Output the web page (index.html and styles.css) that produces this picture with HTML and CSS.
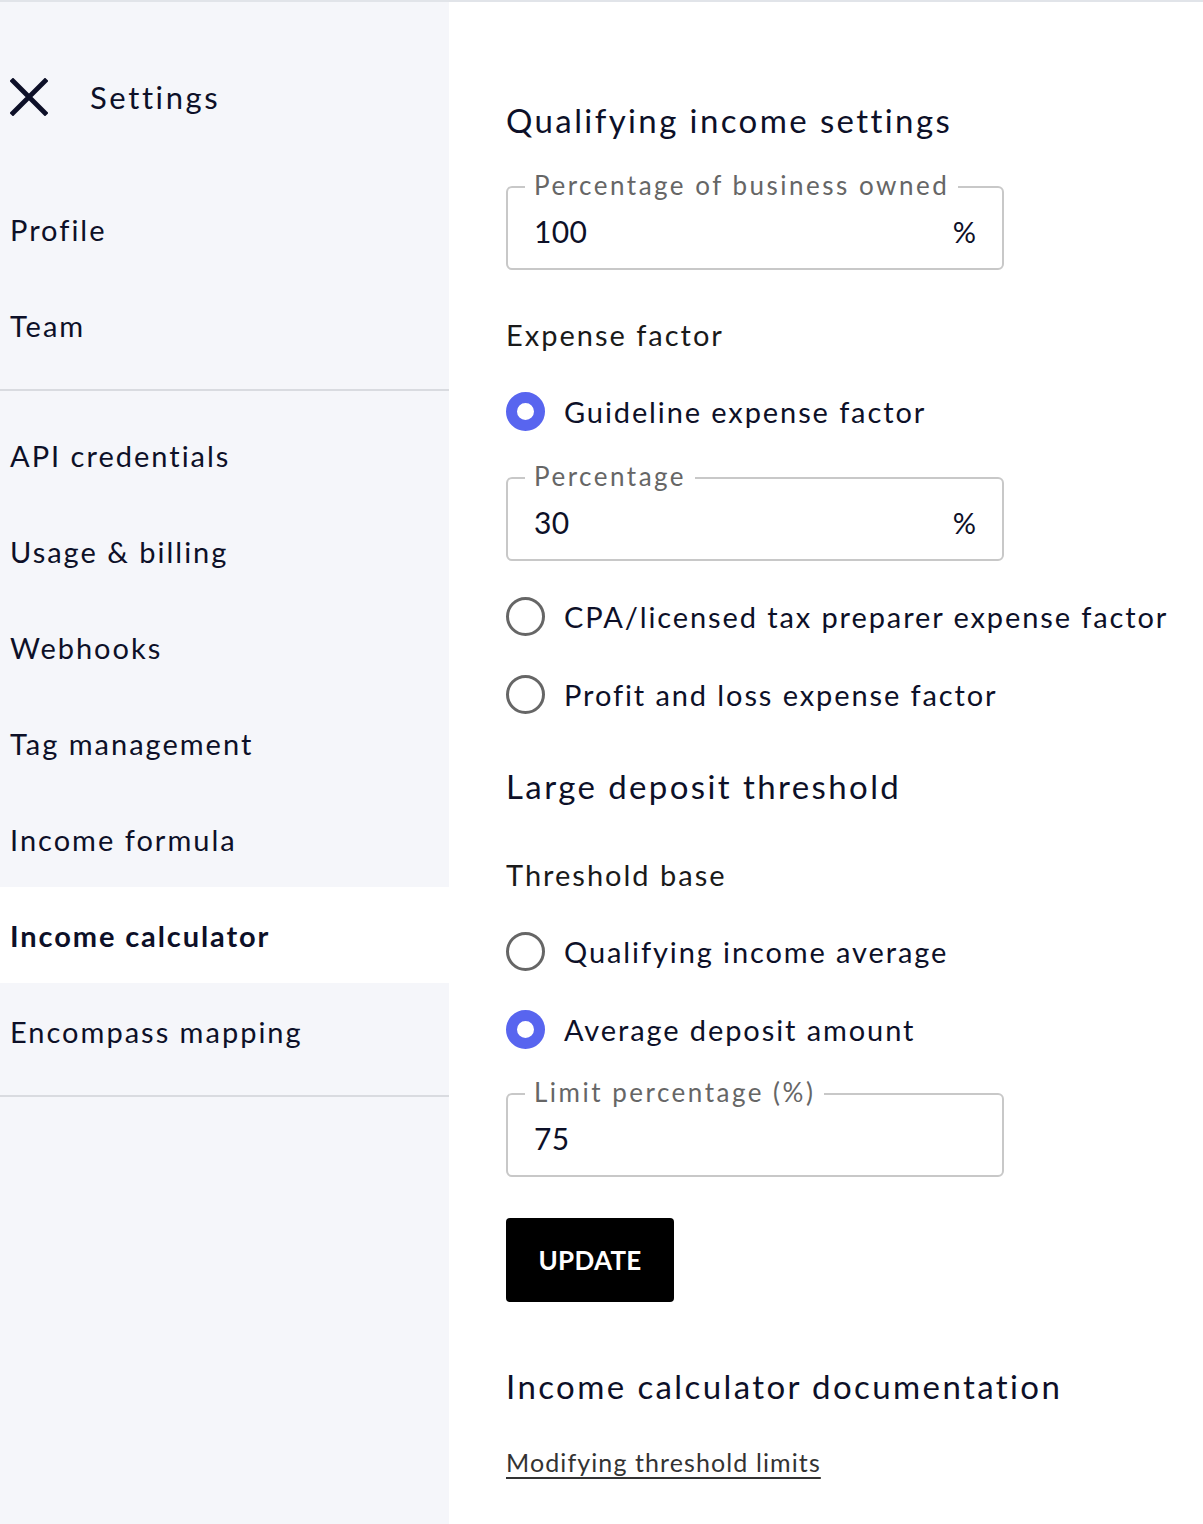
FILE: index.html
```html
<!DOCTYPE html>
<html lang="en">
<head>
<meta charset="utf-8">
<title>Settings</title>
<link rel="stylesheet" href="styles.css">
</head>
<body>
<div class="page">
  <aside class="sidebar">
    <div class="sidebar-header">
      <svg class="close-icon" viewBox="0 0 38 38" width="38" height="38" aria-hidden="true">
        <path d="M3 3 L35 35 M35 3 L3 35" stroke="#0d1028" stroke-width="4.8" stroke-linecap="square" fill="none"/>
      </svg>
      <span class="sidebar-title">Settings</span>
    </div>
    <nav class="nav-group">
      <a class="nav-item">Profile</a>
      <a class="nav-item">Team</a>
    </nav>
    <nav class="nav-group">
      <a class="nav-item">API credentials</a>
      <a class="nav-item">Usage &amp; billing</a>
      <a class="nav-item">Webhooks</a>
      <a class="nav-item">Tag management</a>
      <a class="nav-item">Income formula</a>
      <a class="nav-item active">Income calculator</a>
      <a class="nav-item">Encompass mapping</a>
    </nav>
  </aside>

  <main class="content">
    <h2 class="section-title">Qualifying income settings</h2>

    <div class="field field-first">
      <span class="field-label">Percentage of business owned</span>
      <span class="field-value">100</span>
      <span class="field-suffix">%</span>
    </div>

    <div class="group-label group-label-expense">Expense factor</div>

    <div class="radio radio-first">
      <span class="radio-dot checked"></span>
      <span class="radio-text">Guideline expense factor</span>
    </div>

    <div class="field field-inner">
      <span class="field-label">Percentage</span>
      <span class="field-value">30</span>
      <span class="field-suffix">%</span>
    </div>

    <div class="radio radio-after-field">
      <span class="radio-dot"></span>
      <span class="radio-text">CPA/licensed tax preparer expense factor</span>
    </div>
    <div class="radio">
      <span class="radio-dot"></span>
      <span class="radio-text">Profit and loss expense factor</span>
    </div>

    <h2 class="section-title section-title-deposit">Large deposit threshold</h2>

    <div class="group-label group-label-threshold">Threshold base</div>

    <div class="radio radio-first">
      <span class="radio-dot"></span>
      <span class="radio-text">Qualifying income average</span>
    </div>
    <div class="radio">
      <span class="radio-dot checked"></span>
      <span class="radio-text">Average deposit amount</span>
    </div>

    <div class="field field-limit">
      <span class="field-label">Limit percentage (%)</span>
      <span class="field-value">75</span>
    </div>

    <button class="update-btn" type="button">UPDATE</button>

    <h2 class="section-title section-title-docs">Income calculator documentation</h2>

    <a class="doc-link">Modifying threshold limits</a>
  </main>
</div>
</body>
</html>
```

FILE: styles.css
```css
* { box-sizing: border-box; }

html, body {
  margin: 0;
  padding: 0;
  background: #ffffff;
}

body {
  font-family: "Lato", "Liberation Sans", sans-serif;
  color: #0d1028;
}

.page {
  display: flex;
  min-height: 1524px;
  border-top: 2px solid #e1e4e9;
}

/* Sidebar */
.sidebar {
  width: 449px;
  flex: 0 0 449px;
  background: #f5f6fa;
}

.sidebar-header {
  display: flex;
  align-items: center;
  gap: 42px;
  padding: 76px 0 65px 10px;
}

.close-icon { display: block; }

.sidebar-title {
  font-size: 31px;
  letter-spacing: 2.6px;
  line-height: 38px;
}

.nav-group {
  display: flex;
  flex-direction: column;
  padding: 0 0 16px;
  border-bottom: 2px solid #d9dbe0;
}

.nav-group + .nav-group {
  padding-top: 16px;
}

.nav-item {
  display: flex;
  align-items: center;
  height: 96px;
  padding-left: 10px;
  font-size: 29px;
  letter-spacing: 2px;
  color: #0d1028;
}

.nav-item.active {
  background: #ffffff;
  font-weight: 700;
  letter-spacing: 1.9px;
}

/* Content */
.content {
  flex: 1;
  display: flex;
  flex-direction: column;
  align-items: flex-start;
  padding: 98px 0 0 57px;
}

.section-title {
  margin: 0;
  font-size: 33px;
  font-weight: 400;
  letter-spacing: 2.4px;
  line-height: 40px;
}

.section-title-deposit { margin-top: 52px; }
.section-title-docs { margin-top: 64px; }

.field {
  position: relative;
  width: 498px;
  height: 84px;
  border: 2px solid #c8c8c8;
  border-radius: 6px;
  display: flex;
  align-items: center;
  padding: 0 26px 0 26px;
}

.field-first { margin-top: 46px; }
.field-inner { margin-top: 46px; }
.field-limit { margin-top: 44px; }

.field-label {
  position: absolute;
  left: 17px;
  top: -19px;
  padding: 0 9px;
  background: #ffffff;
  font-size: 26px;
  letter-spacing: 2.5px;
  line-height: 32px;
  color: #666666;
}

.field-value {
  flex: 1;
  font-size: 30px;
  letter-spacing: 0.4px;
  margin-top: 6px;
  color: #0d1028;
}

.field-suffix {
  font-size: 29px;
  margin-top: 6px;
  color: #0d1028;
}

.group-label {
  font-size: 29px;
  letter-spacing: 2px;
  line-height: 40px;
  color: #1a1a1a;
}

.group-label-expense { margin-top: 45px; }
.group-label-threshold { margin-top: 49px; }

.radio {
  display: flex;
  align-items: center;
  gap: 19px;
  height: 40px;
  margin-top: 38px;
}

.radio-first { margin-top: 36px; }
.radio-after-field { margin-top: 35px; }

.radio-dot {
  width: 39px;
  height: 39px;
  border-radius: 50%;
  border: 3px solid #666666;
  flex: 0 0 39px;
}

.radio-dot.checked {
  border: 11px solid #5865ef;
  background: #ffffff;
}

.radio-text {
  font-size: 29px;
  letter-spacing: 1.9px;
  color: #0d1028;
}

.update-btn {
  margin-top: 41px;
  width: 168px;
  height: 84px;
  border: 0;
  border-radius: 4px;
  background: #000000;
  color: #ffffff;
  font-family: "Lato", "Liberation Sans", sans-serif;
  font-size: 26px;
  font-weight: 700;
  letter-spacing: 0.3px;
  padding: 0;
}

.doc-link {
  margin-top: 36px;
  font-size: 25px;
  letter-spacing: 1.1px;
  line-height: 40px;
  color: #333333;
  text-decoration: underline;
  text-underline-offset: 5px;
}
```
